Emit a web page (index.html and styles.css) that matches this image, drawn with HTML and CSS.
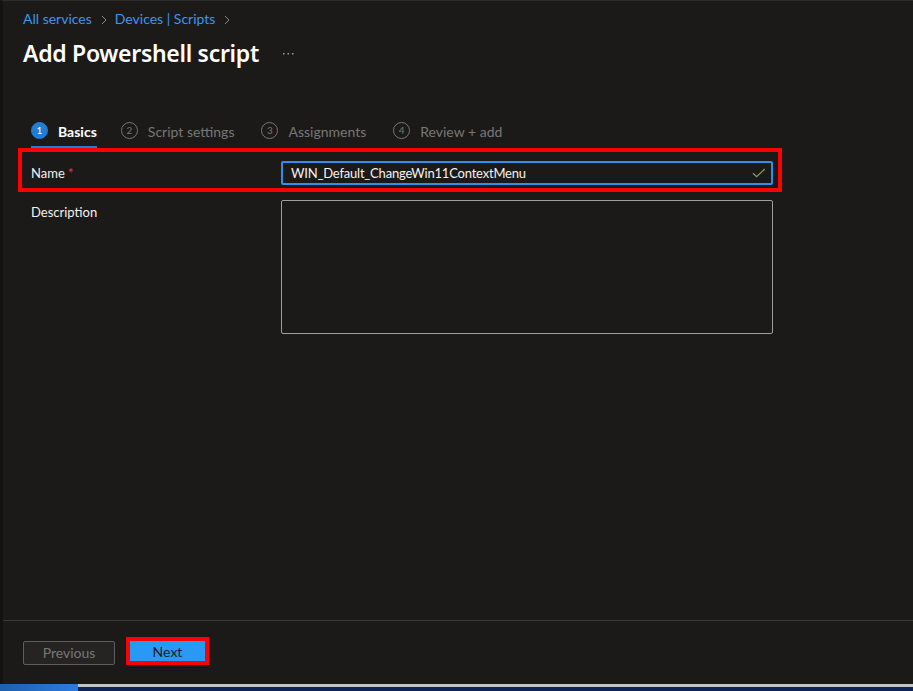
FILE: index.html
```html
<!DOCTYPE html>
<html lang="en">
<head>
  <meta charset="UTF-8" />
  <meta name="viewport" content="width=device-width, initial-scale=1.0"/>
  <title>Add Powershell script - Microsoft Intune</title>
  <link rel="stylesheet" href="styles.css">
</head>
<body>
  <div class="blade">
    <div class="blade-header">
      <nav class="breadcrumb">
        <a href="#">All services</a>
        <svg class="chevron" width="6" height="10" viewBox="0 0 6 10"><path d="M1 1 L5 5 L1 9" fill="none" stroke="#8a8886" stroke-width="1"/></svg>
        <a href="#">Devices | Scripts</a>
        <svg class="chevron" width="6" height="10" viewBox="0 0 6 10"><path d="M1 1 L5 5 L1 9" fill="none" stroke="#8a8886" stroke-width="1"/></svg>
      </nav>
      <div class="title-row">
        <h1>Add Powershell script</h1>
        <svg class="more" width="14" height="4" viewBox="0 0 14 4">
          <rect x="1" y="1" width="1.5" height="1.5" fill="#a19f9d"/>
          <rect x="5.5" y="1" width="1.5" height="1.5" fill="#a19f9d"/>
          <rect x="10" y="1" width="1.5" height="1.5" fill="#a19f9d"/>
        </svg>
      </div>
    </div>

    <div class="blade-content">
      <div class="wizard-tabs">
        <div class="tab active"><span class="step">1</span>Basics</div>
        <div class="tab"><span class="step">2</span>Script settings</div>
        <div class="tab"><span class="step">3</span>Assignments</div>
        <div class="tab"><span class="step">4</span>Review + add</div>
      </div>

      <form id="basicsForm">
        <div class="form-row highlight">
          <label for="script-name">Name <span class="required">*</span></label>
          <div class="input-wrap">
            <input type="text" id="script-name" value="WIN_Default_ChangeWin11ContextMenu">
            <svg class="valid" width="14" height="10" viewBox="0 0 14 10">
              <path d="M1 5.2 L4.6 8.6 L12.8 1" fill="none" stroke="#80a852" stroke-width="1.2"/>
            </svg>
          </div>
        </div>
        <div class="form-row">
          <label for="script-desc">Description</label>
          <textarea id="script-desc"></textarea>
        </div>
      </form>
    </div>

    <div class="blade-footer">
      <button class="btn btn-secondary" disabled>Previous</button>
      <button class="btn btn-primary highlight-btn">Next</button>
    </div>
  </div>

  <div class="taskbar">
    <div class="taskbar-start"></div>
    <div class="taskbar-rest"></div>
  </div>
</body>
</html>
```

FILE: styles.css
```css
html, body {
  margin: 0;
  height: 691px;
  overflow: hidden;
}

body {
  display: flex;
  flex-direction: column;
  background: #1b1a19;
  font-family: Lato, "Noto Sans", sans-serif;
  font-size: 14px;
  color: #f3f2f1;
}

.blade {
  flex: 1;
  display: flex;
  flex-direction: column;
  border-top: 1px solid #2c2c2c;
  border-left: 3px solid #121212;
}

.blade-header {
  padding: 8px 0 0 20px;
}

.breadcrumb {
  display: flex;
  align-items: center;
  height: 20px;
  line-height: 20px;
}

.breadcrumb a {
  color: #3a96f0;
  text-decoration: none;
}

.breadcrumb .chevron {
  margin: 1px 8px 0 9px;
}

.title-row {
  display: flex;
  align-items: center;
  margin-top: 8px;
  height: 32px;
}

.title-row h1 {
  margin: 0;
  font-family: "Noto Sans", sans-serif;
  font-size: 23px;
  font-weight: 600;
  letter-spacing: -0.3px;
  color: #ffffff;
}

.more {
  margin-left: 23px;
  margin-top: 2px;
}

.blade-content {
  flex: 1;
  padding: 48px 0 0 28px;
}

.wizard-tabs {
  display: flex;
  height: 31px;
}

.tab {
  display: flex;
  align-items: center;
  color: #797775;
  margin-right: 27px;
  border-bottom: 2px solid transparent;
  padding-bottom: 1px;
}

.tab .step {
  display: inline-flex;
  justify-content: center;
  align-items: center;
  box-sizing: border-box;
  width: 17px;
  height: 17px;
  border: 1px solid #797775;
  border-radius: 50%;
  font-size: 10px;
  margin-right: 10px;
  margin-top: -2px;
}

.tab.active {
  margin-right: 24px;
  color: #ffffff;
  font-weight: 700;
  border-bottom-color: #1f7fd8;
}

.tab.active .step {
  background: #1f7fd8;
  border-color: #1f7fd8;
  font-weight: 400;
}

.form-row {
  display: flex;
  align-items: flex-start;
  width: 742px;
  font-size: 13px;
}

.form-row label {
  width: 250px;
  flex-shrink: 0;
  line-height: 24px;
  color: #f3f2f1;
}

.required {
  color: #e33d3d;
}

.form-row.highlight {
  border: 4px solid #ff0000;
  margin-left: -13px;
  padding: 9px 5px 3px 9px;
  width: 742px;
  align-items: center;
}

.input-wrap {
  position: relative;
  width: 492px;
}

.input-wrap input {
  box-sizing: border-box;
  width: 100%;
  height: 24px;
  padding: 0 30px 0 8px;
  background: #1b1a19;
  border: 2px solid #2f8ee8;
  border-radius: 2px;
  color: #f3f2f1;
  font-family: inherit;
  font-size: 13px;
  letter-spacing: -0.2px;
  outline: none;
}

.valid {
  position: absolute;
  right: 7px;
  top: 7px;
}

.form-row:not(.highlight) {
  margin-top: 8px;
}

textarea {
  box-sizing: border-box;
  width: 492px;
  height: 134px;
  background: #1b1a19;
  border: 1px solid #a19f9d;
  border-radius: 2px;
  resize: none;
  color: #f3f2f1;
  font-family: inherit;
}

.blade-footer {
  display: flex;
  align-items: center;
  gap: 11px;
  height: 63px;
  padding-left: 20px;
  border-top: 1px solid #393837;
}

.btn {
  font-family: inherit;
  font-size: 14px;
  border-radius: 2px;
  cursor: pointer;
}

.btn-secondary {
  width: 92px;
  height: 24px;
  background: #252423;
  border: 1px solid #5f5e5c;
  color: #797775;
}

.btn-primary {
  box-sizing: border-box;
  width: 83px;
  height: 28px;
  margin-top: -3px;
  background: #2899f5;
  color: #1b1a19;
  border: 4px solid #ff0000;
  border-radius: 0;
}

.taskbar {
  display: flex;
  height: 7px;
}

.taskbar-start {
  width: 78px;
  background: linear-gradient(to right, #1f5fae, #2c7be0);
}

.taskbar-rest {
  flex: 1;
  background: #0e2358;
  border-top: 3px solid #c3c3c3;
}
```
